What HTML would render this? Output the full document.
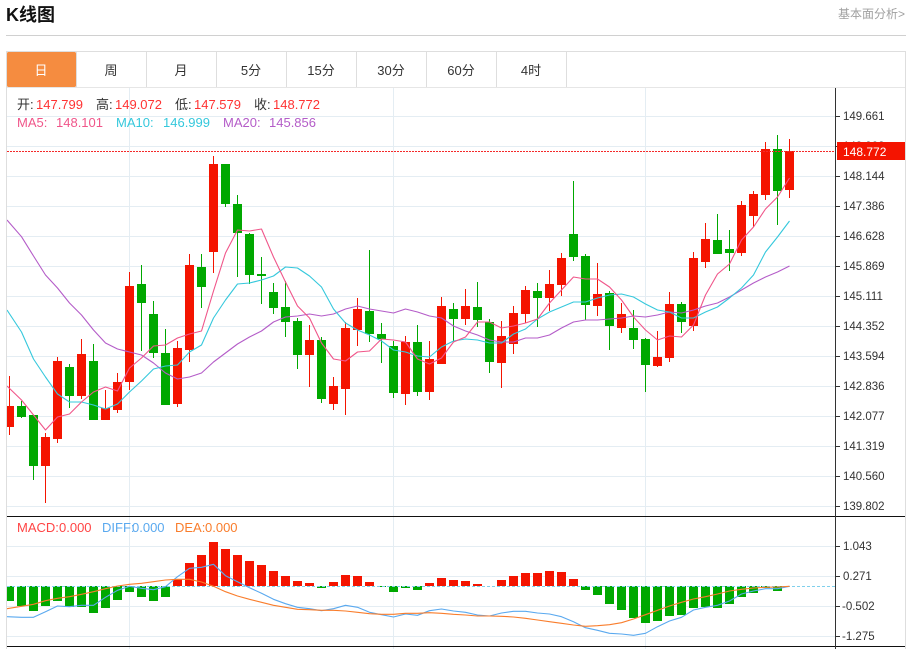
<!DOCTYPE html>
<html lang="zh">
<head>
<meta charset="utf-8">
<title>K线图</title>
<style>
html,body{margin:0;padding:0;background:#fff;width:913px;height:649px;overflow:hidden}
svg{display:block;position:absolute;left:0;top:0}
text{font-family:"Liberation Sans","Noto Sans CJK SC",sans-serif}
.ax text{font-size:11.5px;fill:#333}
.lg text{font-size:13px}
.tab text{font-size:13px;fill:#333;text-anchor:middle}
</style>
</head>
<body>
<svg width="913" height="649" viewBox="0 0 913 649" xmlns="http://www.w3.org/2000/svg">
<defs><clipPath id="c"><rect x="7" y="88" width="828" height="561"/></clipPath></defs>

<text x="6" y="21" font-size="18" font-weight="700" fill="#111">K线图</text>
<text x="838" y="18" font-size="12" fill="#a0a0a0">基本面分析&gt;</text>
<rect x="6" y="35" width="900" height="1" fill="#d0d0d0"/>

<!-- frame -->
<path d="M6.5 649V51.5H905.5V649" fill="none" stroke="#dedede"/>
<path d="M7 87.5H905" stroke="#e6e6e6"/>
<rect x="7" y="52" width="69" height="35" rx="1.5" fill="#f58c40"/>
<path d="M76.5 52V87M146.5 52V87M216.5 52V87M286.5 52V87M356.5 52V87M426.5 52V87M496.5 52V87M566.5 52V87" stroke="#dedede"/>
<g class="tab">
<text x="41" y="75" style="fill:#fff">日</text>
<text x="111" y="75">周</text>
<text x="181" y="75">月</text>
<text x="251" y="75">5分</text>
<text x="321" y="75">15分</text>
<text x="391" y="75">30分</text>
<text x="461" y="75">60分</text>
<text x="531" y="75">4时</text>
</g>

<!-- grid -->
<path d="M7 116.5H835M7 146.5H835M7 176.5H835M7 206.5H835M7 236.5H835M7 266.5H835M7 296.5H835M7 326.5H835M7 356.5H835M7 386.5H835M7 416.5H835M7 446.5H835M7 476.5H835M7 506.5H835M7 546.5H835M7 576.5H835M7 606.5H835M7 636.5H835M129.5 88V649M393.5 88V649M645.5 88V649" stroke="#e4edf3" fill="none"/>

<g clip-path="url(#c)">
<!-- red candles -->
<path stroke="#f41400" fill="none" d="M9.5 376V435M45.5 433V503M57.5 357V443M81.5 339V399M105.5 390V420M117.5 373V413M129.5 272V390M177.5 341V407M189.5 254V362M213.5 156V273M309.5 325V387M333.5 377V410M345.5 322V415M357.5 298V346M405.5 336V405M429.5 341V400M441.5 297V364M465.5 289V325M501.5 321V388M513.5 306V354M525.5 286V323M549.5 270V311M561.5 253V296M597.5 263V316M621.5 303V333M657.5 331V367M669.5 292V362M693.5 252V331M705.5 223V268M741.5 201V256M753.5 191V227M765.5 142V200M789.5 139V198"/>
<path fill="#f41400" d="M5 406h9v21h-9zM41 437h9v29h-9zM53 361h9v78h-9zM77 354h9v42h-9zM101 408h9v12h-9zM113 382h9v28h-9zM125 286h9v96h-9zM173 348h9v56h-9zM185 265h9v85h-9zM209 164h9v88h-9zM305 340h9v15h-9zM329 386h9v18h-9zM341 328h9v61h-9zM353 309h9v21h-9zM401 342h9v52h-9zM425 359h9v33h-9zM437 306h9v58h-9zM461 306h9v13h-9zM497 336h9v27h-9zM509 313h9v31h-9zM521 290h9v24h-9zM545 284h9v14h-9zM557 258h9v27h-9zM593 294h9v12h-9zM617 314h9v14h-9zM653 357h9v9h-9zM665 304h9v54h-9zM689 258h9v68h-9zM701 239h9v23h-9zM737 205h9v48h-9zM749 194h9v22h-9zM761 149h9v46h-9zM785 151h9v39h-9z"/>
<!-- green candles -->
<path stroke="#00a800" fill="none" d="M21.5 401V418M33.5 415V480M69.5 364V408M93.5 344V420M141.5 265V351M153.5 301V358M165.5 329V405M201.5 254V308M225.5 164V207M237.5 195V277M249.5 233V284M261.5 257V304M273.5 283V314M285.5 281V337M297.5 318V369M321.5 337V403M369.5 250V342M381.5 323V363M393.5 341V398M417.5 325V396M453.5 303V342M477.5 282V327M489.5 319V373M537.5 283V327M573.5 181V261M585.5 254V320M609.5 291V350M633.5 310V349M645.5 338V392M681.5 302V333M717.5 214V254M729.5 230V271M777.5 135V225"/>
<path fill="#00a800" d="M17 406h9v11h-9zM29 415h9v51h-9zM65 367h9v29h-9zM89 361h9v59h-9zM137 284h9v19h-9zM149 314h9v39h-9zM161 353h9v52h-9zM197 267h9v20h-9zM221 164h9v40h-9zM233 204h9v29h-9zM245 234h9v41h-9zM257 274h9v2h-9zM269 292h9v16h-9zM281 307h9v15h-9zM293 321h9v34h-9zM317 340h9v59h-9zM365 311h9v23h-9zM377 334h9v5h-9zM389 346h9v47h-9zM413 342h9v50h-9zM449 309h9v10h-9zM473 307h9v13h-9zM485 322h9v40h-9zM533 291h9v7h-9zM569 234h9v23h-9zM581 256h9v49h-9zM605 293h9v33h-9zM629 328h9v12h-9zM641 339h9v26h-9zM677 304h9v18h-9zM713 240h9v14h-9zM725 249h9v4h-9zM773 149h9v42h-9z"/>

<!-- MA lines -->
<g fill="none" stroke-width="1.1" stroke-linejoin="round">
<polyline stroke="#b45cc8" points="7,220 21.5,236.7 33.5,256 45.5,275 57.5,288 69.5,303 81.5,315 93.5,330 105.5,343 117.5,349 129.5,352 141.5,355 153.5,363 165.5,373 177.5,379 189.5,377 201.5,373 213.5,362 225.5,353 237.5,344 249.5,337 261.5,331 273.5,322 285.5,317 297.5,316 309.5,314 321.5,316 333.5,314 345.5,309 357.5,306 369.5,309 381.5,311 393.5,313 405.5,309 417.5,312 429.5,316 441.5,318 453.5,326 465.5,331 477.5,335 489.5,340 501.5,342 513.5,342 525.5,338 537.5,338 549.5,335 561.5,328 573.5,322 585.5,320 597.5,320 609.5,319 621.5,318 633.5,316 645.5,317 657.5,315 669.5,312 681.5,313 693.5,310 705.5,306 717.5,303 729.5,297 741.5,290 753.5,283 765.5,277 777.5,272 789.5,266"/>
<polyline stroke="#35c8dc" points="7,310 21.5,332 33.5,359 45.5,377 57.5,394 69.5,402 81.5,402 93.5,405 105.5,409 117.5,404 129.5,392 141.5,381 153.5,369 165.5,366 177.5,365 189.5,352 201.5,345 213.5,318 225.5,300 237.5,284 249.5,283 261.5,280 273.5,276 285.5,267 297.5,268 309.5,276 321.5,287 333.5,309 345.5,323 357.5,330 369.5,335 381.5,341 393.5,350 405.5,352 417.5,356 429.5,357 441.5,347 453.5,341 465.5,339 477.5,340 489.5,343 501.5,343 513.5,334 525.5,329 537.5,319 549.5,312 561.5,307 573.5,302 585.5,302 597.5,298 609.5,295 621.5,294 633.5,297 645.5,304 657.5,310 669.5,312 681.5,318 693.5,318 705.5,312 717.5,307 729.5,298 741.5,288 753.5,275 765.5,252 777.5,237 789.5,221"/>
<polyline stroke="#f0568a" points="7,386 21.5,400 33.5,415 45.5,430 57.5,417 69.5,414 81.5,402 93.5,392 105.5,387 117.5,391 129.5,368 141.5,358 153.5,346 165.5,345 177.5,338 189.5,334 201.5,331 213.5,291 225.5,253 237.5,230 249.5,231 261.5,229 273.5,257 285.5,282 297.5,306 309.5,318 321.5,343 333.5,359 345.5,361 357.5,352 369.5,351 381.5,339 393.5,340 405.5,342 417.5,359 429.5,364 441.5,358 453.5,342 465.5,337 477.5,322 489.5,322 501.5,328 513.5,326 525.5,323 537.5,319 549.5,303 561.5,290 573.5,277 585.5,279 597.5,279 609.5,287 621.5,300 633.5,317 645.5,330 657.5,340 669.5,336 681.5,337 693.5,325 705.5,295 717.5,274 729.5,264 741.5,240 753.5,227 765.5,209 777.5,197 789.5,178"/>
</g>

<!-- MACD bars -->
<path fill="#00a800" d="M5 586h9v15h-9zM17 586h9v20h-9zM29 586h9v25h-9zM41 586h9v20h-9zM53 586h9v15h-9zM65 586h9v21h-9zM77 586h9v21h-9zM89 586h9v27h-9zM101 586h9v22h-9zM113 586h9v14h-9zM125 586h9v6h-9zM137 586h9v11h-9zM149 586h9v15h-9zM161 586h9v11h-9zM317 586h9v2h-9zM389 586h9v6h-9zM401 586h9v2h-9zM413 586h9v4h-9zM377 586h9v1h-9zM581 586h9v4h-9zM593 586h9v9h-9zM605 586h9v18h-9zM617 586h9v24h-9zM629 586h9v32h-9zM641 586h9v37h-9zM653 586h9v35h-9zM665 586h9v30h-9zM677 586h9v29h-9zM689 586h9v22h-9zM701 586h9v21h-9zM713 586h9v22h-9zM725 586h9v18h-9zM737 586h9v11h-9zM749 586h9v7h-9zM761 586h9v2h-9zM773 586h9v5h-9z"/>
<path fill="#f41400" d="M173 579h9v7h-9zM185 563h9v23h-9zM197 555h9v31h-9zM209 542h9v44h-9zM221 549h9v37h-9zM233 555h9v31h-9zM245 561h9v25h-9zM257 565h9v21h-9zM269 571h9v15h-9zM281 576h9v10h-9zM293 581h9v5h-9zM305 583h9v3h-9zM329 582h9v4h-9zM341 575h9v11h-9zM353 576h9v10h-9zM365 582h9v4h-9zM425 583h9v3h-9zM437 578h9v8h-9zM449 580h9v6h-9zM461 581h9v5h-9zM473 584h9v2h-9zM497 580h9v6h-9zM509 576h9v10h-9zM521 573h9v13h-9zM533 573h9v13h-9zM545 571h9v15h-9zM557 572h9v14h-9zM569 579h9v7h-9z"/>
<path d="M7 586.5H835" stroke="#7fd0ec" stroke-dasharray="3 2" fill="none"/>

<g fill="none" stroke-width="1.1" stroke-linejoin="round">
<polyline stroke="#5aa9ef" points="7,616.7 21.5,617.3 33.5,617.3 45.5,611.7 57.5,606 69.5,606.7 81.5,605.3 93.5,605.3 105.5,597.3 117.5,590.3 129.5,586.3 141.5,588.3 153.5,589.7 165.5,586.7 177.5,576.7 189.5,568.3 201.5,567.3 213.5,564.3 225.5,575.7 237.5,581.7 249.5,587.7 261.5,593.3 273.5,599.3 285.5,603.7 297.5,607.3 309.5,608.7 321.5,610.7 333.5,608.7 345.5,605.3 357.5,607.3 369.5,612.3 381.5,614.7 393.5,617 405.5,614 417.5,615.3 429.5,610.7 441.5,609 453.5,611 465.5,612.3 477.5,615 489.5,616 501.5,613 513.5,611.3 525.5,611.3 537.5,613 549.5,614 561.5,616.7 573.5,621.7 585.5,627.7 597.5,630.3 609.5,633.3 621.5,634 633.5,635.3 645.5,633.3 657.5,626.7 669.5,621 681.5,617.3 693.5,610 705.5,607.3 717.5,605.3 729.5,601 741.5,594 753.5,591 765.5,588.7 777.5,588.7 789.5,586.3"/>
<polyline stroke="#f97d2c" points="7,608.7 21.5,606.3 33.5,604.3 45.5,600.7 57.5,598.3 69.5,596.7 81.5,594.3 93.5,591.7 105.5,588.7 117.5,586 129.5,584.3 141.5,583.3 153.5,581.7 165.5,580 177.5,579.3 189.5,579.3 201.5,582 213.5,586.3 225.5,591.7 237.5,596 249.5,599.3 261.5,602.3 273.5,605.3 285.5,607.3 297.5,609.3 309.5,609.7 321.5,610.3 333.5,610.3 345.5,611 357.5,612.3 369.5,613.7 381.5,614.3 393.5,614.3 405.5,613.3 417.5,613.3 429.5,612.7 441.5,613.3 453.5,614.3 465.5,615 477.5,616 489.5,616 501.5,616.3 513.5,617 525.5,618.3 537.5,620 549.5,621.7 561.5,623.3 573.5,625 585.5,626.3 597.5,625.7 609.5,624.7 621.5,622.7 633.5,619 645.5,614.7 657.5,610.3 669.5,606 681.5,602.3 693.5,599 705.5,596.7 717.5,594 729.5,591 741.5,589.3 753.5,588 765.5,587.3 777.5,587 789.5,586.3"/>
</g>
</g>

<!-- separators / axis -->
<rect x="7" y="516" width="898" height="1" fill="#111"/>
<rect x="7" y="646" width="898" height="1" fill="#111"/>
<rect x="835" y="88" width="1" height="561" fill="#333"/>
<path d="M836 116.5h4M836 146.5h4M836 176.5h4M836 206.5h4M836 236.5h4M836 266.5h4M836 296.5h4M836 326.5h4M836 356.5h4M836 386.5h4M836 416.5h4M836 446.5h4M836 476.5h4M836 506.5h4M836 546.5h4M836 576.5h4M836 606.5h4M836 636.5h4" stroke="#333"/>
<g class="ax">
<text x="843" y="120">149.661</text>
<text x="843" y="150">148.902</text>
<text x="843" y="180">148.144</text>
<text x="843" y="210">147.386</text>
<text x="843" y="240">146.628</text>
<text x="843" y="270">145.869</text>
<text x="843" y="300">145.111</text>
<text x="843" y="330">144.352</text>
<text x="843" y="360">143.594</text>
<text x="843" y="390">142.836</text>
<text x="843" y="420">142.077</text>
<text x="843" y="450">141.319</text>
<text x="843" y="480">140.560</text>
<text x="843" y="510">139.802</text>
<text x="843" y="550">1.043</text>
<text x="843" y="580">0.271</text>
<text x="842" y="610">-0.502</text>
<text x="842" y="640">-1.275</text>
</g>

<!-- last price -->
<path d="M7 151.5H835" stroke="#f42a2a" stroke-dasharray="2 1" fill="none"/>
<rect x="837" y="142" width="68" height="18" fill="#f41400"/>
<text x="843" y="156" font-size="12" fill="#fff">148.772</text>

<!-- legends -->
<g class="lg">
<text x="17" y="109" fill="#333">开:</text><text x="36" y="109" fill="#f33">147.799</text>
<text x="96" y="109" fill="#333">高:</text><text x="115" y="109" fill="#f33">149.072</text>
<text x="175" y="109" fill="#333">低:</text><text x="194" y="109" fill="#f33">147.579</text>
<text x="254" y="109" fill="#333">收:</text><text x="273" y="109" fill="#f33">148.772</text>
<text x="17" y="127" fill="#f0568a">MA5:</text><text x="56" y="127" fill="#f0568a">148.101</text>
<text x="116" y="127" fill="#35c8dc">MA10:</text><text x="163" y="127" fill="#35c8dc">146.999</text>
<text x="223" y="127" fill="#b45cc8">MA20:</text><text x="269" y="127" fill="#b45cc8">145.856</text>
<text x="17" y="532" fill="#f44">MACD:</text><text x="59" y="532" fill="#f44">0.000</text>
<text x="102" y="532" fill="#5aa9ef">DIFF:</text><text x="132" y="532" fill="#5aa9ef">0.000</text>
<text x="175" y="532" fill="#f97d2c">DEA:</text><text x="205" y="532" fill="#f97d2c">0.000</text>
</g>
</svg>
</body>
</html>
